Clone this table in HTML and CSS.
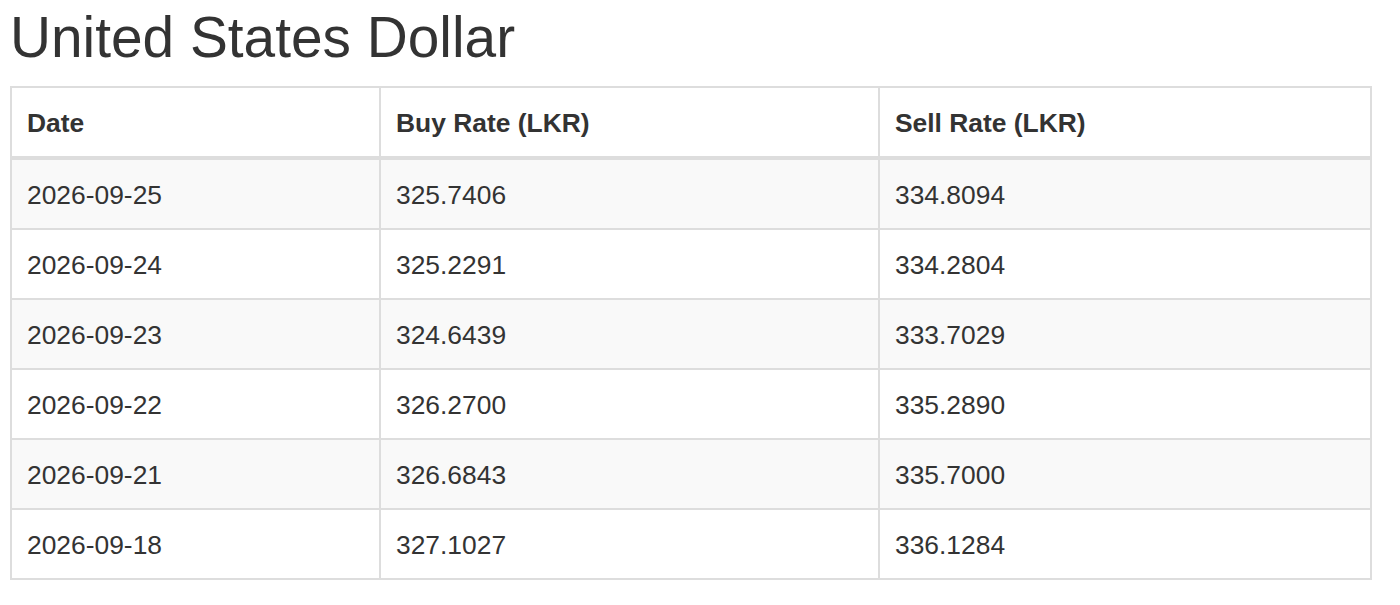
FILE: index.html
```html
<!DOCTYPE html>
<html lang="en">
<head>
<meta charset="utf-8">
<title>United States Dollar</title>
<link rel="stylesheet" href="styles.css">
</head>
<body>
<div class="container">
  <h1 class="title">United States Dollar</h1>
  <table class="rates">
    <colgroup>
      <col class="col-date">
      <col class="col-buy">
      <col class="col-sell">
    </colgroup>
    <thead>
      <tr><th>Date</th><th>Buy Rate (LKR)</th><th>Sell Rate (LKR)</th></tr>
    </thead>
    <tbody>
      <tr><td>2026-09-25</td><td>325.7406</td><td>334.8094</td></tr>
      <tr><td>2026-09-24</td><td>325.2291</td><td>334.2804</td></tr>
      <tr><td>2026-09-23</td><td>324.6439</td><td>333.7029</td></tr>
      <tr><td>2026-09-22</td><td>326.2700</td><td>335.2890</td></tr>
      <tr><td>2026-09-21</td><td>326.6843</td><td>335.7000</td></tr>
      <tr><td>2026-09-18</td><td>327.1027</td><td>336.1284</td></tr>
    </tbody>
  </table>
</div>
</body>
</html>
```
FILE: styles.css
```css
html, body {
  margin: 0;
  padding: 0;
  background: #fff;
}
body {
  font-family: "Liberation Sans", Arial, Helvetica, sans-serif;
  color: #333;
}
.container {
  padding: 0 10px;
}
.title {
  margin: 7px 0 17px 0;
  font-size: 56.8px;
  line-height: 1.1;
  font-weight: 400;
  color: #333;
}
.rates {
  width: 1360px;
  border-collapse: collapse;
  table-layout: fixed;
  font-size: 26.4px;
  line-height: 38px;
  border: 2px solid #ddd;
}
.col-date { width: 369px; }
.col-buy { width: 499px; }
.col-sell { width: 492px; }
.rates th,
.rates td {
  padding: 16px 15px 14px 15px;
  border: 2px solid #ddd;
  text-align: left;
  vertical-align: top;
}
.rates th {
  font-weight: 700;
  border-bottom: 4px solid #ddd;
}
.rates tbody tr:nth-child(odd) {
  background: #f9f9f9;
}
```
